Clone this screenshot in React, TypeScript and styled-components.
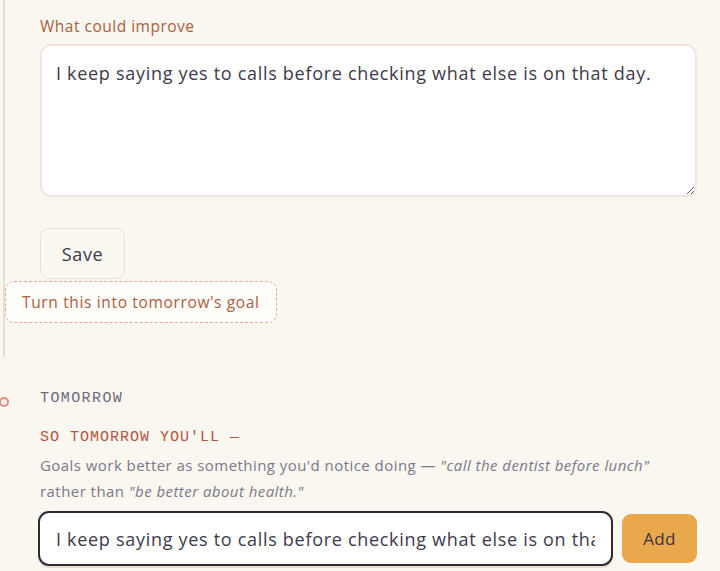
import React from "react";
import styled, { createGlobalStyle } from "styled-components";

const Global = createGlobalStyle`
  html, body { margin: 0; padding: 0; background: #faf7f1; }
  body { font-family: "Open Sans", "Liberation Sans", sans-serif; color: #3d3a4a; }
  * { box-sizing: border-box; }
`;

const Page = styled.div`
  width: 720px;
  height: 571px;
  overflow: hidden;
  background: #faf7f1;
`;

const Rail = styled.section`
  margin-left: 3px;
  border-left: 2px solid #e7dfd2;
  padding: 16px 23px 34px 0;
  display: flex;
  flex-direction: column;
`;

const Column = styled.div`
  margin-left: 35px;
  display: flex;
  flex-direction: column;
`;

const FieldLabel = styled.label`
  font-size: 15.5px;
  letter-spacing: 0.5px;
  color: #a9603f;
  line-height: 20px;
  margin-bottom: 8px;
`;

const Area = styled.textarea`
  width: 657px;
  height: 153px;
  border: 2px solid #ede7dc;
  border-radius: 11px;
  background: #ffffff;
  padding: 13px 14px;
  font-family: inherit;
  font-size: 18px;
  letter-spacing: 0.7px;
  line-height: 28px;
  color: #3d3a4a;
  outline: none;
  resize: vertical;
`;

const SaveButton = styled.button`
  margin-top: 31px;
  align-self: flex-start;
  width: 85px;
  height: 51px;
  border: 1.5px solid #e9e1d4;
  border-radius: 9px;
  background: #faf7f1;
  font-family: inherit;
  font-size: 18px;
  letter-spacing: 0.6px;
  color: #3d3a4a;
`;

const GoalButton = styled.button`
  margin-top: 2px;
  align-self: flex-start;
  width: 272px;
  height: 42px;
  border: 1.5px dashed #eba497;
  border-radius: 9px;
  background: #fffdfa;
  font-family: inherit;
  font-size: 15.5px;
  letter-spacing: 0.65px;
  color: #a9603f;
  padding: 0 0 0 16px;
  text-align: left;
  white-space: nowrap;
`;

const Day = styled.section`
  position: relative;
  padding: 33px 23px 0 40px;
  display: flex;
  flex-direction: column;
`;

const Dot = styled.span`
  position: absolute;
  left: -1px;
  top: 40px;
  width: 10px;
  height: 10px;
  border-radius: 50%;
  border: 2px solid #e8897a;
  background: #faf7f1;
`;

const Heading = styled.h3<{ $accent?: boolean }>`
  margin: ${(p) => (p.$accent ? "21px 0 0" : "0")};
  font-family: "Liberation Mono", "DejaVu Sans Mono", monospace;
  font-weight: 400;
  font-size: 15px;
  letter-spacing: ${(p) => (p.$accent ? "1px" : "1.4px")};
  line-height: 18px;
  color: ${(p) => (p.$accent ? "#b5533c" : "#6e6a7c")};
`;

const Hint = styled.p`
  margin: 5px 0 0;
  font-size: 15px;
  letter-spacing: 0.45px;
  line-height: 26px;
  color: #7d7889;
  max-width: 640px;
`;

const Row = styled.div`
  margin-top: 7px;
  margin-left: -2px;
  display: flex;
  align-items: center;
  gap: 9px;
`;

const GoalInput = styled.input`
  width: 575px;
  height: 55px;
  border: 2px solid #2e2b35;
  border-radius: 11px;
  background: #ffffff;
  box-shadow: 0 2px 0 #e7dfd2;
  padding: 0 16px;
  font-family: inherit;
  font-size: 18px;
  letter-spacing: 0.7px;
  color: #3d3a4a;
  outline: none;
`;

const AddButton = styled.button`
  width: 75px;
  height: 49px;
  border: none;
  border-radius: 9px;
  background: #e9a84c;
  font-family: inherit;
  font-size: 17px;
  letter-spacing: 0.3px;
  color: #3a3340;
`;

const text = "I keep saying yes to calls before checking what else is on that day.";

export default function App() {
  return (
    <Page>
      <Global />
      <Rail>
        <Column>
          <FieldLabel>What could improve</FieldLabel>
          <Area defaultValue={text} />
          <SaveButton>Save</SaveButton>
        </Column>
        <GoalButton>Turn this into tomorrow's goal</GoalButton>
      </Rail>
      <Day>
        <Dot />
        <Heading>TOMORROW</Heading>
        <Heading $accent>SO TOMORROW YOU'LL —</Heading>
        <Hint>
          Goals work better as something you'd notice doing — <em>"call the dentist before lunch"</em> rather than <em>"be better about health."</em>
        </Hint>
        <Row>
          <GoalInput defaultValue={text} />
          <AddButton>Add</AddButton>
        </Row>
      </Day>
    </Page>
  );
}
